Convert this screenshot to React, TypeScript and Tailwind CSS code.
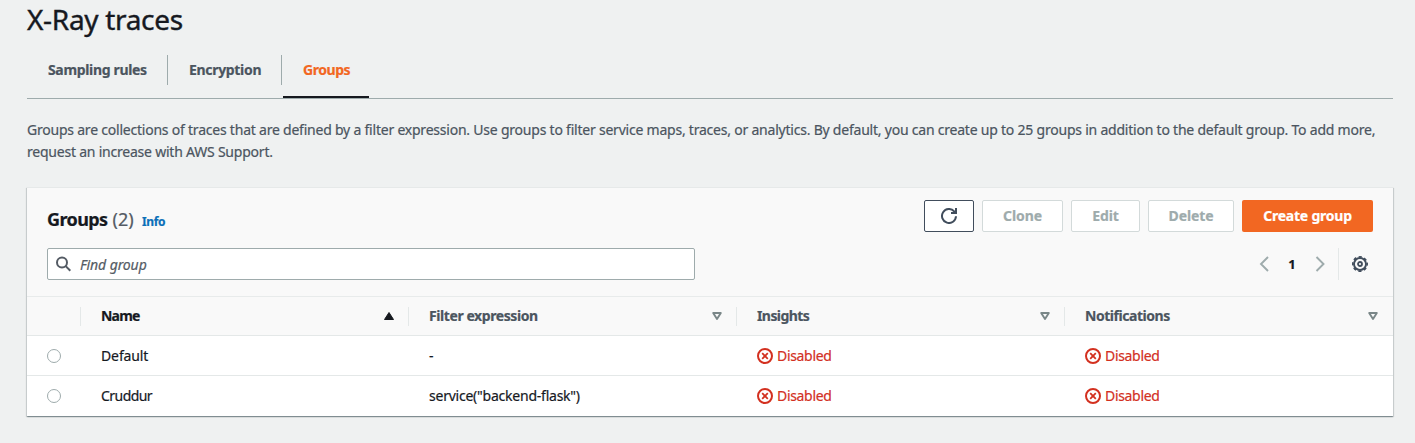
import { ReactNode } from 'react';
import clsx from 'clsx';

const rows = [
  { name: 'Default', filter: '-', nameTracking: 'tracking-[-0.12px]' },
  { name: 'Cruddur', filter: 'service("backend-flask")', nameTracking: 'tracking-[-0.55px]' },
];

const grid = 'grid grid-cols-[54px_repeat(4,328px)]';

function SearchIcon() {
  return (
    <svg width="16" height="16" viewBox="0 0 16 16" fill="none" stroke="#545b64" strokeWidth="2">
      <circle cx="7" cy="6.5" r="5" />
      <path d="M10.7 10.1 15.3 14.7" />
    </svg>
  );
}

function RefreshIcon() {
  return (
    <svg width="16" height="16" viewBox="0 0 16 16" fill="none" stroke="#414d5c" strokeWidth="2">
      <path d="M15 8.3A7 7 0 1 1 13.2 3.3L14.8 5" />
      <path d="M15 0v5h-5" />
    </svg>
  );
}

function Chevron({ right }: { right?: boolean }) {
  return (
    <svg width="16" height="16" viewBox="0 0 16 16" fill="none" stroke="#9eabac" strokeWidth="1.9">
      <path d={right ? 'M4.5 1l7 7-7 7' : 'M12 1L5 8l7 7'} />
    </svg>
  );
}

function GearIcon() {
  return (
    <svg width="16" height="16" viewBox="0 0 16 16" fill="none" stroke="#414d5c">
      <circle cx="8" cy="8" r="6" strokeWidth="1.9" />
      <circle cx="8" cy="8" r="7.2" strokeWidth="1.6" strokeDasharray="3.2 2.455" strokeDashoffset="1.6" />
      <circle cx="8" cy="8" r="2" strokeWidth="1.8" />
    </svg>
  );
}

function Disabled() {
  return (
    <span className="flex items-center gap-1 text-[#d3301f]">
      <svg width="16" height="16" viewBox="0 0 16 16" fill="none" stroke="currentColor" strokeWidth="2">
        <circle cx="8" cy="8" r="7" />
        <path d="M5.2 5.2l5.6 5.6M10.8 5.2l-5.6 5.6" strokeWidth="1.8" />
      </svg>
      <span className="tracking-[-0.32px]">Disabled</span>
    </span>
  );
}

function HeaderCell({ children, sorted, last, tracking }: { children: ReactNode; sorted?: boolean; last?: boolean; tracking: string }) {
  return (
    <div className="flex items-center">
      <div
        className={clsx(
          'flex h-[19px] flex-1 items-center justify-between pl-5',
          last ? 'pr-[15px]' : 'border-r border-[#e4e8e8] pr-[14px]',
          sorted ? 'text-[#16191f]' : 'text-[#4b555f]',
        )}
      >
        <span className={clsx('font-bold', tracking)}>{children}</span>
        <svg width="10" height="8" viewBox="0 0 10 8">
          {sorted ? (
            <path d="M5 .5 9.5 7.5H.5z" fill="#16191f" stroke="#16191f" strokeLinejoin="round" />
          ) : (
            <path d="M1.2 1h7.6L5 7z" fill="none" stroke="#7a8788" strokeWidth="1.9" strokeLinejoin="round" />
          )}
        </svg>
      </div>
    </div>
  );
}

function GhostButton({ children, width }: { children: ReactNode; width: string }) {
  return (
    <button className={clsx('h-8 rounded-xs border border-[#d3dada] bg-white font-bold tracking-[-0.1px] text-[#9eabac]', width)}>{children}</button>
  );
}

export default function App() {
  return (
    <main className="h-[443px] overflow-hidden bg-[#eff1f1] px-[27px] pt-0.5 pr-[22px] font-['Noto_Sans',sans-serif] text-sm text-[#16191f] [-webkit-text-stroke:0.2px_currentColor]">
      <h1 className="h-9 text-[28px] leading-[35px] tracking-[-0.32px] [-webkit-text-stroke:0.4px_currentColor]">X-Ray traces</h1>

      <nav className="mt-[17px] flex h-11 w-[1366px] border-b border-[#9eabac] font-bold leading-[30px] text-[#4b555f]">
        <a className="h-[30px] w-[141px] border-r border-[#9eabac] pl-[21px] tracking-[-0.34px]">Sampling rules</a>
        <a className="h-[30px] w-[114px] border-r border-[#9eabac] pl-[21px] tracking-[-0.32px]">Encryption</a>
        <a className="ml-px h-[43px] w-[86px] border-b-2 border-[#16191f] pl-5 tracking-[-0.45px] text-[#f26722]">Groups</a>
      </nav>

      <p className="mt-5 h-11 whitespace-nowrap leading-[22px] tracking-[-0.22px] text-[#4b555f]">
        Groups are collections of traces that are defined by a filter expression. Use groups to filter service maps, traces, or
        analytics. By default, you can create up to 25 groups in addition to the default group. To add more,
        <br />
        request an increase with AWS Support.
      </p>

      <section className="mt-6 h-[229px] w-[1366px] border-t border-[#e6e9e9] bg-white shadow-[0_1px_1px_0_rgba(0,28,36,0.3),1px_1px_1px_0_rgba(0,28,36,0.12),-1px_1px_1px_0_rgba(0,28,36,0.12)]">
        <div className="h-[109px] border-b border-[#e8ebeb] bg-[#f9f9f9] px-5 pt-3">
          <div className="flex h-8 justify-between">
            <h2 className="flex items-baseline text-lg leading-[38px]">
              <span className="w-[65.5px] font-bold tracking-[-0.6px]">Groups</span>
              <span className="w-[29.5px] text-[#545b64]">(2)</span>
              <a className="text-xs font-bold tracking-[-0.4px] text-[#0b6fb8]">Info</a>
            </h2>
            <div className="flex gap-2">
              <button className="flex h-8 w-[50px] items-center justify-center rounded-xs border border-[#414d5c] bg-white">
                <RefreshIcon />
              </button>
              <GhostButton width="w-[81px]">Clone</GhostButton>
              <GhostButton width="w-[69px]">Edit</GhostButton>
              <GhostButton width="w-[86px]">Delete</GhostButton>
              <button className="h-8 w-[131px] rounded-xs bg-[#f26722] font-bold tracking-[-0.22px] text-white">Create group</button>
            </div>
          </div>
          <div className="mt-4 flex h-8 justify-between">
            <div className="flex w-[648px] items-center gap-[9px] rounded-xs border border-[#9eabac] bg-white pl-[7px] text-[#545b64]">
              <SearchIcon />
              <span className="pt-px italic tracking-[-0.1px]">Find group</span>
            </div>
            <div className="flex items-center">
              <Chevron />
              <span className="w-10 text-center text-[13px] font-bold">1</span>
              <Chevron right />
              <div className="ml-2.5 flex h-8 items-center border-l border-[#e4e8e8] pl-[13px] pr-[5px]">
                <GearIcon />
              </div>
            </div>
          </div>
        </div>

        <div className={clsx(grid, 'h-[39px] border-b border-[#e4e8e8] bg-[#f9f9f9]')}>
          <div className="my-auto h-[19px] border-r border-[#e4e8e8]" />
          <HeaderCell sorted tracking="tracking-[-0.8px]">Name</HeaderCell>
          <HeaderCell tracking="tracking-[-0.42px]">Filter expression</HeaderCell>
          <HeaderCell tracking="tracking-[-0.58px]">Insights</HeaderCell>
          <HeaderCell last tracking="tracking-[-0.46px]">Notifications</HeaderCell>
        </div>

        {rows.map((row, i) => (
          <div key={row.name} className={clsx(grid, 'h-10 items-center', i === 0 && 'border-b border-[#e4e8e8]')}>
            <div className="pl-5">
              <div className="size-3.5 rounded-full border border-[#9eabac] bg-white" />
            </div>
            <div className={clsx('pl-5', row.nameTracking)}>{row.name}</div>
            <div className="pl-5 tracking-[-0.23px]">{row.filter}</div>
            <div className="pl-5"><Disabled /></div>
            <div className="pl-5"><Disabled /></div>
          </div>
        ))}
      </section>
    </main>
  );
}
